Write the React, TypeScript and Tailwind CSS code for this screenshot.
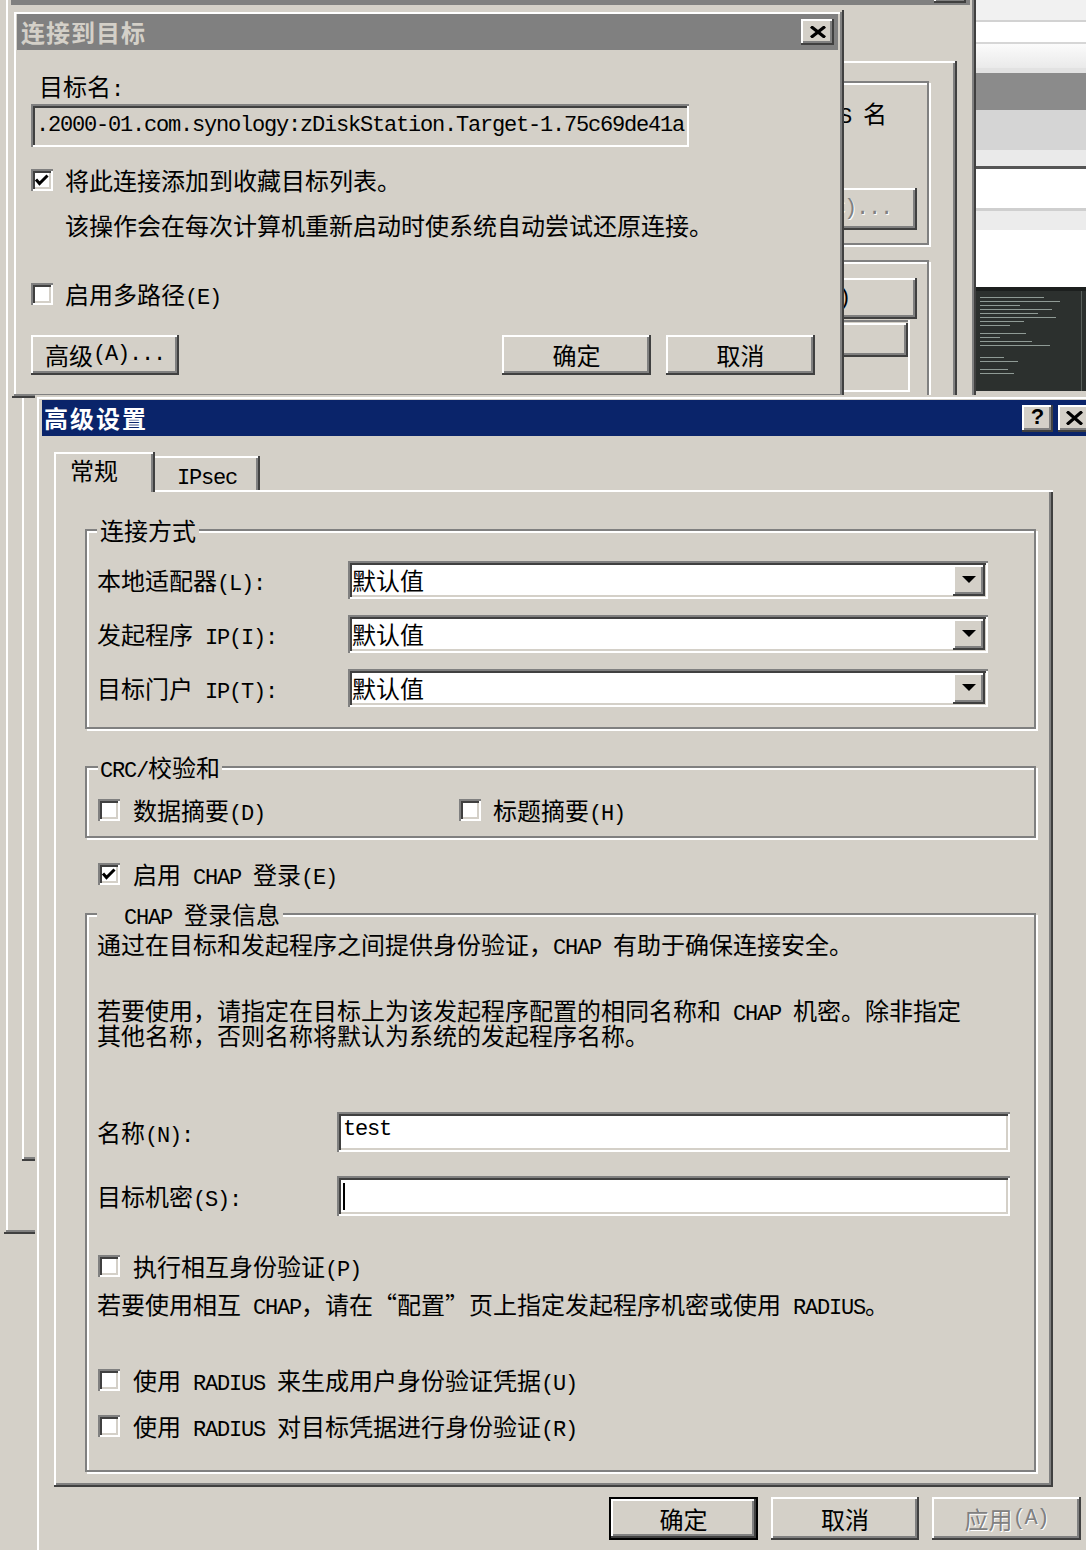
import React from 'react'

const frame =
  'shadow-[inset_-2px_-2px_0_#404040,inset_2px_2px_0_#d4d0c8,inset_-4px_-4px_0_#808080,inset_4px_4px_0_#ffffff]'
const raised = 'shadow-[inset_-2px_-2px_0_#404040,inset_2px_2px_0_#ffffff,inset_-4px_-4px_0_#808080]'
const sunken =
  'shadow-[inset_2px_2px_0_#808080,inset_-2px_-2px_0_#ffffff,inset_4px_4px_0_#404040,inset_-4px_-4px_0_#d4d0c8]'
const etched = 'border-2 border-[#808080] shadow-[inset_2px_2px_0_#ffffff,2px_2px_0_#ffffff]'

// half-width ascii like the old SimSun dialogs
function Txt({ s }: { s: string }) {
  const parts = s.match(/[ -~]+|[^ -~]+/g) ?? []
  return (
    <>
      {parts.map((p, i) =>
        /^[ -~]/.test(p) ? (
          <span
            key={i}
            className="whitespace-pre font-['Liberation_Mono',monospace] text-[22px] leading-[16px] tracking-[-1.2px]"
          >
            {p}
          </span>
        ) : (
          <span key={i}>{p}</span>
        )
      )}
    </>
  )
}

function Check({ on }: { on?: boolean }) {
  return (
    <span className={`flex h-[22px] w-[22px] shrink-0 bg-white ${sunken}`}>
      {on && (
        <svg width="22" height="22" viewBox="0 0 22 22">
          <path d="M5 10.5 L8.5 14.5 L16.5 6.5" fill="none" stroke="#000" strokeWidth="3" />
        </svg>
      )}
    </span>
  )
}

function CheckRow({ on, label, className }: { on?: boolean; label: string; className?: string }) {
  return (
    <div className={`flex h-[22px] items-center ${className ?? ''}`}>
      <Check on={on} />
      <span className="whitespace-nowrap leading-[28px]">
        <Txt s={label} />
      </span>
    </div>
  )
}

function XGlyph({ w = 16, h = 12 }: { w?: number; h?: number }) {
  return (
    <svg width={w} height={h} viewBox={`0 0 ${w} ${h}`}>
      <path d={`M1 0.5 L${w - 1} ${h - 0.5} M${w - 1} 0.5 L1 ${h - 0.5}`} stroke="#000" strokeWidth="3.2" />
    </svg>
  )
}

function Combo() {
  return (
    <div className={`flex h-[38px] w-[640px] items-center justify-between bg-white pl-[4px] pr-[3px] ${sunken}`}>
      <span className="leading-[28px]">默认值</span>
      <div className={`flex h-[31px] w-[32px] items-center justify-center bg-[#d4d0c8] ${raised}`}>
        <svg width="14" height="8" viewBox="0 0 14 8">
          <path d="M0 0 H14 L7 7 Z" fill="#000" />
        </svg>
      </div>
    </div>
  )
}

function BackWindow() {
  return (
    <div
      className={`absolute left-[4px] top-[-32px] flex h-[1266px] w-[972px] flex-col bg-[#d4d0c8] pl-[7px] pr-[6px] pt-[4px] ${frame}`}
    >
      <div className="flex h-[33px] shrink-0 items-end justify-end bg-[#808080] pb-[2px] pr-[4px]">
        <div className={`h-[27px] w-[32px] bg-[#d4d0c8] ${raised}`} />
      </div>
      <div className="ml-[11px] mt-[56px] flex h-[1100px] w-[935px] flex-col pl-[18px] pr-[28px] pt-[20px] shadow-[inset_-2px_-2px_0_#404040,inset_2px_2px_0_#ffffff,inset_-4px_-4px_0_#808080]">
        <div className={`flex h-[164px] flex-col items-end ${etched}`}>
          <div className="mr-[40px] mt-[18px] h-[24px] leading-[24px]">
            <Txt s="S 名" />
          </div>
          <div
            className={`mr-[10px] mt-[63px] flex h-[42px] w-[170px] items-center justify-center text-[#808080] [text-shadow:1px_1px_0_#fff] ${raised}`}
          >
            <Txt s="更改(C)..." />
          </div>
        </div>
        <div className={`mt-[15px] flex h-[420px] flex-col items-end ${etched}`}>
          <div className={`mr-[10px] mt-[16px] flex h-[41px] w-[266px] items-center justify-center ${raised}`}>
            <Txt s="发现门户(P)" />
          </div>
          <div className="mr-[17px] mt-[1px] flex h-[72px] w-[400px] flex-col pr-[2px] pt-[3px] shadow-[inset_-2px_-2px_0_#ffffff,inset_2px_2px_0_#808080]">
            <div className={`h-[34px] ${raised}`} />
          </div>
        </div>
      </div>
    </div>
  )
}

function SideApp() {
  const lines = [64, 80, 40, 72, 58, 76, 44, 30, 0, 46, 20, 52, 70, 0, 0, 24, 38, 0, 28, 34]
  return (
    <div className="absolute left-[976px] top-0 flex h-[395px] w-[110px] flex-col">
      <div className="h-[20px] bg-[#f1f1f1]" />
      <div className="h-[2px] bg-[#d2d2d2]" />
      <div className="h-[20px] bg-white" />
      <div className="h-[2px] bg-[#d6d6d6]" />
      <div className="h-[24px] bg-linear-to-b from-[#fbfbfb] to-[#eaeaea]" />
      <div className="h-[5px] bg-[#e2e2e2]" />
      <div className="h-[37px] bg-[#8b8b8b]" />
      <div className="h-[40px] bg-[#d5d5d5]" />
      <div className="h-[16px] bg-[#eaeaea]" />
      <div className="h-[3px] bg-[#555555]" />
      <div className="h-[39px] bg-white" />
      <div className="h-[3px] bg-[#cfcfcf]" />
      <div className="h-[19px] bg-[#ececec]" />
      <div className="h-[57px] bg-white" />
      <div className="flex h-[104px] flex-col bg-[#2c302e]">
        <div className="h-[4px] bg-[#1c1f1e]" />
        <div className="flex flex-1">
          <div className="flex flex-1 flex-col gap-[3px] pl-[4px] pt-[6px]">
            {lines.map((w, i) => (
              <div key={i} className="h-[1px] bg-[#8f9a95]" style={{ width: w }} />
            ))}
          </div>
          <div className="mr-[4px] w-[1px] bg-[#59605c]" />
        </div>
      </div>
      <div className="h-[4px] bg-[#d4d0c8]" />
    </div>
  )
}

function ConnectDialog() {
  return (
    <div
      className={`absolute left-[12px] top-[10px] flex h-[388px] w-[832px] flex-col bg-[#d4d0c8] pl-[5px] pr-[6px] pt-[4px] ${frame}`}
    >
      <div className="flex h-[36px] shrink-0 items-center justify-between bg-[#808080] pl-[4px] pr-[4px]">
        <span className="font-bold leading-[28px] tracking-[1px] text-[#d4d0c8]">连接到目标</span>
        <div className={`flex h-[26px] w-[33px] items-center justify-center bg-[#d4d0c8] ${raised}`}>
          <XGlyph />
        </div>
      </div>
      <div className="flex flex-col pl-[14px]">
        <div className="ml-[8px] mt-[22px] h-[28px] leading-[28px]">
          <Txt s="目标名:" />
        </div>
        <div className={`mt-[4px] flex h-[43px] w-[658px] items-center pl-[5px] leading-[28px] ${sunken}`}>
          <Txt s=".2000-01.com.synology:zDiskStation.Target-1.75c69de41a" />
        </div>
        <CheckRow on label="将此连接添加到收藏目标列表。" className="mt-[22px] gap-[12px]" />
        <div className="ml-[34px] mt-[20px] h-[28px] leading-[28px]">
          该操作会在每次计算机重新启动时使系统自动尝试还原连接。
        </div>
        <CheckRow label="启用多路径(E)" className="mt-[44px] gap-[12px]" />
        <div className="mt-[30px] flex w-[784px]">
          <div className={`flex h-[40px] w-[148px] items-center justify-center ${raised}`}>
            <Txt s="高级(A)..." />
          </div>
          <div className="ml-auto flex gap-[15px]">
            <div className={`flex h-[40px] w-[149px] items-center justify-center ${raised}`}>确定</div>
            <div className={`flex h-[40px] w-[149px] items-center justify-center ${raised}`}>取消</div>
          </div>
        </div>
      </div>
    </div>
  )
}

function AdvancedDialog() {
  return (
    <div
      className={`absolute left-[35px] top-[395px] flex h-[1200px] w-[1063px] flex-col bg-[#d4d0c8] pl-[7px] pr-[6px] pt-[5px] ${frame}`}
    >
      <div className="flex h-[36px] shrink-0 items-center justify-between bg-[#0a246a] pl-[2px] pr-[2px]">
        <span className="font-bold leading-[28px] tracking-[2px] text-white">高级设置</span>
        <div className="flex gap-[5px]">
          <div className={`flex h-[27px] w-[31px] items-center justify-center bg-[#d4d0c8] pb-[2px] ${raised}`}>
            <span className="font-['Liberation_Sans',sans-serif] text-[22px] font-bold leading-none">?</span>
          </div>
          <div className={`flex h-[27px] w-[32px] items-center justify-center bg-[#d4d0c8] pb-[1px] ${raised}`}>
            <XGlyph w={17} h={14} />
          </div>
        </div>
      </div>

      {/* tabs */}
      <div className="ml-[12px] mt-[16px] flex w-[999px] items-end">
        <div className="h-[40px] w-[101px] pl-[16px] pt-[4px] leading-[28px] shadow-[inset_-2px_0_0_#404040,inset_2px_2px_0_#ffffff,inset_-4px_0_0_#808080]">
          常规
        </div>
        <div className="h-[36px] w-[105px] pl-[22px] pt-[4px] leading-[28px] shadow-[inset_0_-2px_0_#ffffff,inset_-2px_0_0_#404040,inset_0_2px_0_#ffffff,inset_-4px_0_0_#808080]">
          <Txt s="IPsec" />
        </div>
        <div className="h-[2px] flex-1 bg-white" />
      </div>

      <div className="ml-[12px] flex h-[995px] w-[999px] flex-col pl-[31px] pr-[17px] shadow-[inset_-2px_-2px_0_#404040,inset_2px_0_0_#ffffff,inset_-4px_-4px_0_#808080]">
        <fieldset className={`mt-[24px] flex flex-col gap-[16px] pb-[20px] pl-[10px] pt-[17px] ${etched}`}>
          <legend className="h-[28px] bg-[#d4d0c8] px-[3px] leading-[28px]">连接方式</legend>
          {['本地适配器(L):', '发起程序 IP(I):', '目标门户 IP(T):'].map(l => (
            <div key={l} className="flex items-center">
              <span className="w-[251px] leading-[28px]">
                <Txt s={l} />
              </span>
              <Combo />
            </div>
          ))}
        </fieldset>

        <fieldset className={`mt-[24px] flex pb-[15px] pl-[11px] pt-[18px] ${etched}`}>
          <legend className="h-[28px] bg-[#d4d0c8] px-[2px] leading-[28px]">
            <Txt s="CRC/校验和" />
          </legend>
          <CheckRow label="数据摘要(D)" className="w-[361px] gap-[13px]" />
          <CheckRow label="标题摘要(H)" className="gap-[12px]" />
        </fieldset>

        <CheckRow on label="启用 CHAP 登录(E)" className="ml-[13px] mt-[25px] gap-[13px]" />

        <fieldset className={`mt-[15px] flex flex-col pb-[33px] pl-[10px] pt-[2px] ${etched}`}>
          <legend className="h-[28px] bg-[#d4d0c8] px-[3px] leading-[28px]">
            <Txt s="  CHAP 登录信息" />
          </legend>
          <div className="h-[28px] leading-[28px]">
            <Txt s="通过在目标和发起程序之间提供身份验证，CHAP 有助于确保连接安全。" />
          </div>
          <div className="mt-[40px] h-[46px] whitespace-nowrap leading-[23px]">
            <Txt s="若要使用，请指定在目标上为该发起程序配置的相同名称和 CHAP 机密。除非指定" />
            <br />
            <Txt s="其他名称，否则名称将默认为系统的发起程序名称。" />
          </div>
          <div className="mt-[68px] flex items-center">
            <span className="w-[240px] leading-[28px]">
              <Txt s="名称(N):" />
            </span>
            <div className={`flex h-[40px] w-[673px] items-center bg-white pb-[4px] pl-[6px] ${sunken}`}>
              <Txt s="test" />
            </div>
          </div>
          <div className="mt-[24px] flex items-center">
            <span className="w-[240px] leading-[28px]">
              <Txt s="目标机密(S):" />
            </span>
            <div className={`flex h-[40px] w-[673px] items-center bg-white pl-[6px] ${sunken}`}>
              <div className="h-[27px] w-[2px] bg-black" />
            </div>
          </div>
          <CheckRow label="执行相互身份验证(P)" className="ml-[1px] mt-[39px] gap-[13px]" />
          <div className="mt-[13px] h-[28px] leading-[28px]">
            <Txt s="若要使用相互 CHAP，请在“配置”页上指定发起程序机密或使用 RADIUS。" />
          </div>
          <CheckRow label="使用 RADIUS 来生成用户身份验证凭据(U)" className="ml-[1px] mt-[51px] gap-[13px]" />
          <CheckRow label="使用 RADIUS 对目标凭据进行身份验证(R)" className="ml-[1px] mt-[24px] gap-[13px]" />
        </fieldset>
      </div>

      <div className="mt-[10px] flex justify-end gap-[13px] pr-[11px]">
        <div className="flex h-[43px] w-[149px] items-center justify-center shadow-[inset_0_0_0_2px_#000000,inset_-4px_-4px_0_#404040,inset_4px_4px_0_#ffffff,inset_-6px_-6px_0_#808080]">
          确定
        </div>
        <div className={`flex h-[43px] w-[148px] items-center justify-center ${raised}`}>取消</div>
        <div
          className={`flex h-[43px] w-[149px] items-center justify-center text-[#808080] [text-shadow:1px_1px_0_#ffffff] ${raised}`}
        >
          <Txt s="应用(A)" />
        </div>
      </div>
    </div>
  )
}

export default function App() {
  return (
    <div className="relative h-[1550px] w-[1086px] overflow-hidden bg-[#d4d0c8] font-['Noto_Sans_CJK_SC',sans-serif] text-[24px] leading-[28px] text-black">
      <SideApp />
      <BackWindow />
      <ConnectDialog />
      <AdvancedDialog />
    </div>
  )
}
